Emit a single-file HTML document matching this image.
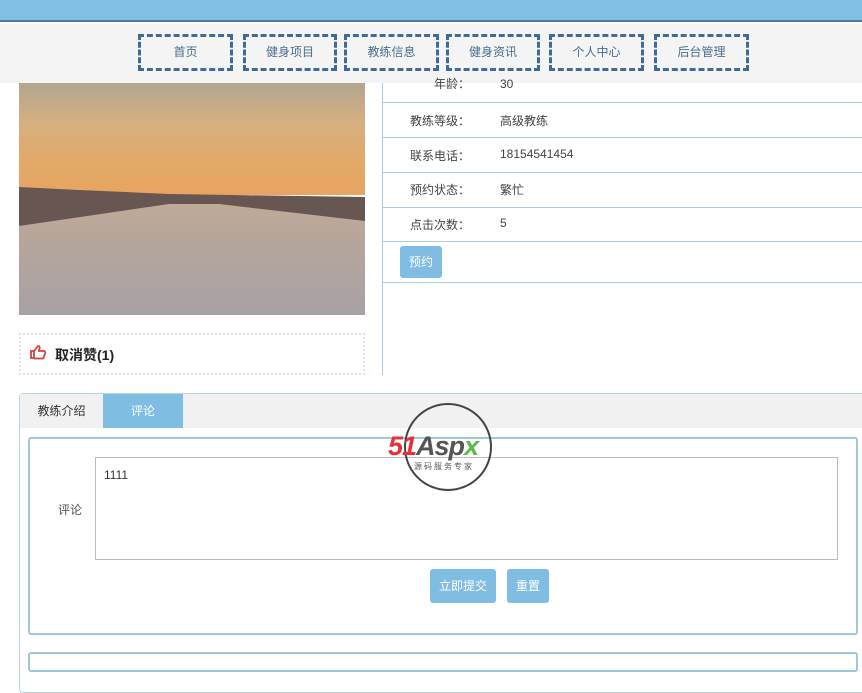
<!DOCTYPE html>
<html><head><meta charset="utf-8"><style>
*{margin:0;padding:0;box-sizing:border-box}
body{width:862px;height:684px;overflow:hidden;background:#fff;font-family:"Liberation Sans","Noto Sans CJK SC",sans-serif;font-size:12px;color:#333;position:relative}
.a{position:absolute}
.top{left:0;top:0;width:862px;height:22px;background:#80c0e4;border-bottom:2px solid #4a7aa6}
.nav{left:0;top:24px;width:862px;height:59px;background:#f4f4f4}
.nb{top:34px;height:37px;border:3px dashed #3f6b97;text-align:center;line-height:31px;color:#4a6e8e;font-size:12px}
.row{left:383px;width:479px;height:1px;background:#a8cedc}
.lb{left:383px;width:87px;text-align:right;color:#444}
.vl{left:500px;color:#444}
.btn{background:#80bde2;color:#fff;border-radius:3px;text-align:center}
</style></head><body>
<div class="a top"></div>
<div class="a nav"></div>
<div class="a nb" style="left:138px;width:95px">首页</div>
<div class="a nb" style="left:243px;width:94px">健身项目</div>
<div class="a nb" style="left:344px;width:95px">教练信息</div>
<div class="a nb" style="left:446px;width:94px">健身资讯</div>
<div class="a nb" style="left:549px;width:95px">个人中心</div>
<div class="a nb" style="left:654px;width:95px">后台管理</div>

<svg class="a" style="left:19px;top:83px" width="346" height="232" viewBox="0 0 346 232">
<defs>
<linearGradient id="s" x1="0" y1="0" x2="0" y2="1"><stop offset="0" stop-color="#b0a690"/><stop offset="0.35" stop-color="#d6b080"/><stop offset="0.75" stop-color="#e4a866"/><stop offset="1" stop-color="#e8a460"/></linearGradient>
<linearGradient id="w" x1="0" y1="0" x2="0" y2="1"><stop offset="0" stop-color="#c0aa98"/><stop offset="0.4" stop-color="#b4a49c"/><stop offset="1" stop-color="#a8a2a4"/></linearGradient>
</defs>
<rect width="346" height="112" fill="url(#s)"/>
<path d="M0 104 L60 107 L150 111 L346 114 L346 138 L0 143Z" fill="#675652"/>
<path d="M0 143 L150 121 L200 121 L346 138 L346 232 L0 232Z" fill="url(#w)"/>
</svg>

<div class="a" style="left:382px;top:83px;width:1px;height:292px;background:#a8cedc"></div>
<div class="a lb" style="top:78px;line-height:12px">年龄：</div><div class="a vl" style="top:78px;line-height:12px">30</div>
<div class="a row" style="top:102px"></div>
<div class="a lb" style="top:112px">教练等级：</div><div class="a vl" style="top:112px">高级教练</div>
<div class="a row" style="top:137px"></div>
<div class="a lb" style="top:147px">联系电话：</div><div class="a vl" style="top:147px">18154541454</div>
<div class="a row" style="top:172px"></div>
<div class="a lb" style="top:181px">预约状态：</div><div class="a vl" style="top:181px">繁忙</div>
<div class="a row" style="top:207px"></div>
<div class="a lb" style="top:216px">点击次数：</div><div class="a vl" style="top:216px">5</div>
<div class="a row" style="top:241px"></div>
<div class="a btn" style="left:400px;top:246px;width:42px;height:32px;line-height:32px">预约</div>
<div class="a row" style="top:282px"></div>

<div class="a" style="left:19px;top:333px;width:346px;height:42px;border:2px dotted #e2e2e2"></div>
<svg class="a" style="left:29px;top:344px" width="18" height="16" viewBox="0 0 18 16"><path d="M2 7h3v7H2z M5 7l4-5c1.5 0 2 1 1.5 2.5L10 7h5c1 0 1.5 1 1.2 2l-1.5 4.5c-.3.8-1 1-1.7 1H5" fill="none" stroke="#d2453a" stroke-width="1.8"/></svg>
<div class="a" style="left:55px;top:345px;font-weight:bold;font-size:14px;color:#222">取消赞(1)</div>

<div class="a" style="left:19px;top:393px;width:850px;height:300px;border:1px solid #b7d7e2;border-radius:4px"></div>
<div class="a" style="left:20px;top:394px;width:842px;height:34px;background:#f1f1f1"></div>
<div class="a" style="left:20px;top:394px;width:83px;height:34px;line-height:34px;text-align:center;color:#333">教练介绍</div>
<div class="a" style="left:103px;top:394px;width:80px;height:34px;line-height:34px;text-align:center;color:#fff;background:#80bde2">评论</div>
<div class="a" style="left:28px;top:437px;width:830px;height:198px;border:2px solid #9cc8d8;border-radius:3px"></div>
<div class="a" style="left:58px;top:501px;color:#555">评论</div>
<div class="a" style="left:95px;top:457px;width:743px;height:103px;border:1px solid #bbb;padding:10px 8px;color:#333">1111</div>
<div class="a btn" style="left:430px;top:569px;width:66px;height:34px;line-height:34px">立即提交</div>
<div class="a btn" style="left:507px;top:569px;width:42px;height:34px;line-height:34px">重置</div>
<div class="a" style="left:28px;top:652px;width:830px;height:20px;border:2px solid #9cc8d8;border-radius:3px"></div>

<div class="a" style="left:404px;top:403px;width:88px;height:88px;border:2px solid #444;border-radius:50%"></div>
<div class="a" style="left:388px;top:432px;font-size:27px;font-weight:bold;font-style:italic;letter-spacing:-1px;line-height:28px"><span style="color:#e5323a">51</span><span style="color:#555">Asp</span><span style="color:#5bb84a">x</span></div>
<div class="a" style="left:414px;top:461px;font-size:8px;color:#555;letter-spacing:2px;background:#fff">源码服务专家</div>
</body></html>
